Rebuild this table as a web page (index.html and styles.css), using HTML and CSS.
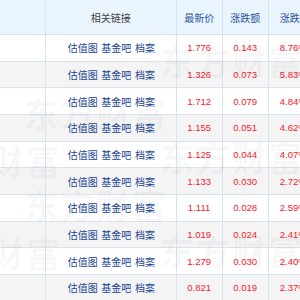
FILE: index.html
```html
<!DOCTYPE html>
<html lang="zh-CN">
<head>
<meta charset="utf-8">
<link rel="stylesheet" href="styles.css">
</head>
<body>
<div class="wrap">
  <div class="grid">
    <div class="cell head"></div>
    <div class="cell head plain">相关链接</div>
    <div class="cell head sort">最新价</div>
    <div class="cell head sort">涨跌额</div>
    <div class="cell head sort last">涨跌幅</div>

    <div class="cell"></div><div class="cell links"><a>估值图</a><a>基金吧</a><a>档案</a></div><div class="cell num">1.776</div><div class="cell num">0.143</div><div class="cell num last">8.76%</div>
    <div class="cell alt"></div><div class="cell alt links"><a>估值图</a><a>基金吧</a><a>档案</a></div><div class="cell alt num">1.326</div><div class="cell alt num">0.073</div><div class="cell alt num last">5.83%</div>
    <div class="cell"></div><div class="cell links"><a>估值图</a><a>基金吧</a><a>档案</a></div><div class="cell num">1.712</div><div class="cell num">0.079</div><div class="cell num last">4.84%</div>
    <div class="cell alt"></div><div class="cell alt links"><a>估值图</a><a>基金吧</a><a>档案</a></div><div class="cell alt num">1.155</div><div class="cell alt num">0.051</div><div class="cell alt num last">4.62%</div>
    <div class="cell"></div><div class="cell links"><a>估值图</a><a>基金吧</a><a>档案</a></div><div class="cell num">1.125</div><div class="cell num">0.044</div><div class="cell num last">4.07%</div>
    <div class="cell alt"></div><div class="cell alt links"><a>估值图</a><a>基金吧</a><a>档案</a></div><div class="cell alt num">1.133</div><div class="cell alt num">0.030</div><div class="cell alt num last">2.72%</div>
    <div class="cell"></div><div class="cell links"><a>估值图</a><a>基金吧</a><a>档案</a></div><div class="cell num">1.111</div><div class="cell num">0.028</div><div class="cell num last">2.59%</div>
    <div class="cell alt"></div><div class="cell alt links"><a>估值图</a><a>基金吧</a><a>档案</a></div><div class="cell alt num">1.019</div><div class="cell alt num">0.024</div><div class="cell alt num last">2.41%</div>
    <div class="cell"></div><div class="cell links"><a>估值图</a><a>基金吧</a><a>档案</a></div><div class="cell num">1.279</div><div class="cell num">0.030</div><div class="cell num last">2.40%</div>
    <div class="cell alt"></div><div class="cell alt links"><a>估值图</a><a>基金吧</a><a>档案</a></div><div class="cell alt num">0.821</div><div class="cell alt num">0.019</div><div class="cell alt num last">2.37%</div>
  </div>
  <div class="wm wm1">东方财富</div>
  <div class="wm wm2">东方财富</div>
  <div class="wm wm3">东方财富</div>
  <div class="wm wm4">东方财富</div>
  <div class="wm wm5">东方财富</div>
  <div class="wm wm6">东方财富</div>
  <div class="wm wm7">东方财富</div>
</div>
</body>
</html>
```
FILE: styles.css
```css
html, body {
  margin: 0;
  padding: 0;
  background: #ffffff;
  overflow: hidden;
}
.wrap {
  position: relative;
  width: 300px;
  height: 300px;
  overflow: hidden;
  font-family: "Liberation Sans", "Noto Sans CJK SC", sans-serif;
}
.grid {
  display: grid;
  grid-template-columns: 46px 130.67px 46px 46px 60px;
  grid-template-rows: 35px;
  grid-auto-rows: 26.67px;
  width: 330px;
}
.cell {
  box-sizing: border-box;
  border-right: 1px solid #d5e4f3;
  border-bottom: 1px solid #d5e4f3;
  display: flex;
  align-items: center;
  justify-content: center;
  white-space: nowrap;
  background: #ffffff;
}
.cell.alt {
  background: #f4f4f4;
}
.cell.head {
  background: #eaf4fd;
  font-family: "Noto Sans CJK SC", sans-serif;
  font-size: 10px;
  padding-top: 1px;
}
.cell.head.plain {
  color: #444444;
}
.cell.head.sort {
  color: #2a57a0;
}
.cell.last {
  justify-content: flex-start;
  padding-left: 11px;
}
.links {
  gap: 3.6px;
  font-family: "Noto Sans CJK SC", sans-serif;
  font-size: 10px;
  padding-left: 1px;
}
.links a {
  color: #1c4595;
}
.num {
  color: #f5222d;
  font-size: 9.6px;
  font-family: "Liberation Sans", sans-serif;
}
.wm {
  position: absolute;
  font-family: "Noto Sans CJK SC", sans-serif;
  font-weight: 700;
  font-size: 34px;
  letter-spacing: 2px;
  color: rgba(0, 0, 0, 0.035);
  pointer-events: none;
  white-space: nowrap;
}
.wm1 { left: 160px; top: 36px; }
.wm2 { left: 24px; top: 88px; }
.wm3 { left: -82px; top: 136px; }
.wm4 { left: 160px; top: 132px; }
.wm5 { left: 24px; top: 180px; }
.wm6 { left: -82px; top: 228px; }
.wm7 { left: 160px; top: 226px; }
```
